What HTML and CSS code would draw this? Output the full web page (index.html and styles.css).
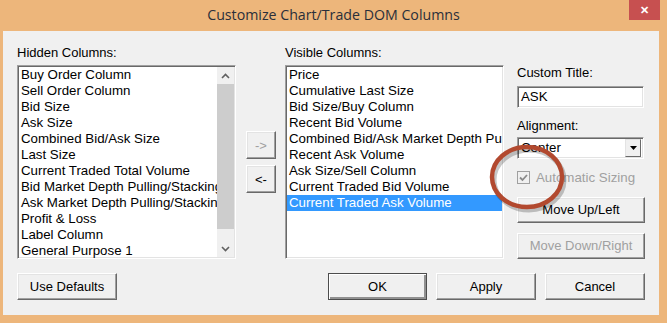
FILE: index.html
```html
<!DOCTYPE html>
<html lang="en">

<head>
    <meta charset="UTF-8">
    <meta name="viewport" content="width=device-width, initial-scale=1.0">
    <link rel="stylesheet" href="styles.css">
</head>

<body>

    <div class="window">
        <div class="titlebar">
            <span></span>
            <span class="title">Customize Chart/Trade DOM Columns</span>
            <span class="close">&#x2715;</span>
        </div>

        <div class="client">
            <div class="main">
                <div class="column">
                    <div class="label">Hidden Columns:</div>
                    <div class="listbox">
                        <ul class="items">
                            <li>Buy Order Column</li>
                            <li>Sell Order Column</li>
                            <li>Bid Size</li>
                            <li>Ask Size</li>
                            <li>Combined Bid/Ask Size</li>
                            <li>Last Size</li>
                            <li>Current Traded Total Volume</li>
                            <li>Bid Market Depth Pulling/Stacking</li>
                            <li>Ask Market Depth Pulling/Stacking</li>
                            <li>Profit &amp; Loss</li>
                            <li>Label Column</li>
                            <li>General Purpose 1</li>
                        </ul>
                        <div class="scrollbar">
                            <div class="arrow">
                                <svg width="9" height="6" viewBox="0 0 9 6"><path d="M1 5 L4.5 1.5 L8 5" fill="none" stroke="#606060" stroke-width="1.6"/></svg>
                            </div>
                            <div class="track">
                                <div class="thumb"></div>
                            </div>
                            <div class="arrow">
                                <svg width="9" height="6" viewBox="0 0 9 6"><path d="M1 1 L4.5 4.5 L8 1" fill="none" stroke="#606060" stroke-width="1.6"/></svg>
                            </div>
                        </div>
                    </div>
                </div>

                <div class="movers">
                    <button class="btn small disabled">-&gt;</button>
                    <button class="btn small">&lt;-</button>
                </div>

                <div class="column">
                    <div class="label">Visible Columns:</div>
                    <div class="listbox">
                        <ul class="items">
                            <li>Price</li>
                            <li>Cumulative Last Size</li>
                            <li>Bid Size/Buy Column</li>
                            <li>Recent Bid Volume</li>
                            <li>Combined Bid/Ask Market Depth Pulling/Stacking</li>
                            <li>Recent Ask Volume</li>
                            <li>Ask Size/Sell Column</li>
                            <li>Current Traded Bid Volume</li>
                            <li class="selected">Current Traded Ask Volume</li>
                        </ul>
                    </div>
                </div>

                <div class="options">
                    <div class="label">Custom Title:</div>
                    <div class="textbox">ASK</div>
                    <div class="label spaced">Alignment:</div>
                    <div class="combo">
                        <span class="combo-text">Center</span>
                        <span class="drop">
                            <svg width="7" height="4" viewBox="0 0 7 4"><path d="M0 0 H7 L3.5 4 Z" fill="#000"/></svg>
                        </span>
                    </div>
                    <div class="check-row">
                        <span class="checkbox">
                            <svg width="9" height="9" viewBox="0 0 9 9"><path d="M1 4.5 L3.5 7 L8 2" fill="none" stroke="#8a8a8a" stroke-width="1.8"/></svg>
                        </span>
                        <span class="check-label">Automatic Sizing</span>
                    </div>
                    <button class="btn wide">Move Up/Left</button>
                    <button class="btn wide disabled">Move Down/Right</button>
                </div>
            </div>

            <div class="footer">
                <button class="btn">Use Defaults</button>
                <div class="actions">
                    <button class="btn default">OK</button>
                    <button class="btn">Apply</button>
                    <button class="btn">Cancel</button>
                </div>
            </div>

            <!-- annotation circle drawn over the dialog -->
            <svg class="marker" width="90" height="80" viewBox="0 0 90 80">
                <ellipse cx="43" cy="38" rx="35" ry="30" fill="none" stroke="rgba(0,0,0,0.22)" stroke-width="5" transform="translate(2 3)"/>
                <ellipse cx="43" cy="38" rx="35" ry="30" fill="none" stroke="#b2492f" stroke-width="4.5"/>
            </svg>
        </div>
    </div>

</body>

</html>
```

FILE: styles.css
```css
body {
    margin: 0;
    font-family: 'Liberation Sans', Arial, sans-serif;
}

.window {
    width: 667px;
    height: 323px;
    background: #edb67b;
    display: flex;
    flex-direction: column;
}

.titlebar {
    height: 31px;
    display: grid;
    grid-template-columns: 1fr auto 1fr;
    align-items: start;
}

.title {
    font-family: 'Open Sans', sans-serif;
    font-size: 14.2px;
    color: #2a2f3a;
    line-height: 30px;
}

.close {
    justify-self: end;
    margin-right: 7px;
    width: 31px;
    height: 20px;
    background: #c75050;
    color: #fff;
    font-size: 11px;
    font-weight: bold;
    text-align: center;
    line-height: 20px;
}

.client {
    position: relative;
    flex: 1;
    margin: 0 8px 8px 3px;
    background: #f0f0f0;
    padding: 14px 14px 0 14px;
    box-sizing: border-box;
}

.main {
    display: flex;
    height: 214px;
}

.label {
    font-size: 13px;
    line-height: 16px;
    height: 16px;
    color: #000;
}

.column {
    width: 219px;
    display: flex;
    flex-direction: column;
}

.listbox {
    margin-top: 4px;
    height: 194px;
    box-sizing: border-box;
    border: 1px solid;
    border-color: #a0a0a0 #ffffff #ffffff #a0a0a0;
    box-shadow: inset 1px 1px #696969, inset -1px -1px #e3e3e3;
    background: #fff;
    display: flex;
    padding: 1px;
    overflow: hidden;
}

.items {
    list-style: none;
    margin: 0;
    padding: 0;
    flex: 1;
    min-width: 0;
}

.items li {
    height: 16px;
    line-height: 16px;
    font-size: 13.3px;
    padding-left: 2px;
    white-space: nowrap;
    overflow: hidden;
    color: #000;
}

.items li.selected {
    background: #3399ff;
    color: #fff;
}

.scrollbar {
    width: 17px;
    display: flex;
    flex-direction: column;
    background: #f0f0f0;
}

.arrow {
    height: 17px;
    display: flex;
    align-items: center;
    justify-content: center;
}

.track {
    flex: 1;
    padding-bottom: 11px;
    display: flex;
}

.thumb {
    flex: 1;
    background: #cdcdcd;
}

.movers {
    width: 30px;
    margin: 0 9px 0 10px;
    padding-top: 86px;
    display: flex;
    flex-direction: column;
    gap: 6px;
}

.btn {
    font-family: 'Liberation Sans', Arial, sans-serif;
    font-size: 13px;
    color: #000;
    background: #f0f0f0;
    border: 1px solid;
    border-color: #ffffff #696969 #696969 #ffffff;
    box-shadow: inset -1px -1px #a0a0a0, inset 1px 1px #e3e3e3;
    height: 27px;
    width: 100px;
    padding: 0;
    margin: 0;
}

.btn.small {
    width: 30px;
    height: 28px;
}

.btn.disabled {
    color: #a0a0a0;
}

.btn.default {
    border: 1px solid #4d4d4d;
    box-shadow: inset 1px 1px #ffffff, inset -2px -2px #909090;
    width: 99px;
}

.options {
    width: 128px;
    margin-left: 13px;
    padding-top: 20px;
    display: flex;
    flex-direction: column;
}

.textbox,
.combo {
    margin-top: 5px;
    width: 127px;
    height: 22px;
    box-sizing: border-box;
    border: 1px solid;
    border-color: #a0a0a0 #ffffff #ffffff #a0a0a0;
    box-shadow: inset 1px 1px #696969, inset -1px -1px #e3e3e3;
    background: #fff;
    font-size: 13.3px;
    line-height: 20px;
    padding-left: 3px;
}

.label.spaced {
    margin-top: 10px;
}

.combo {
    margin-top: 3px;
    display: flex;
    justify-content: space-between;
    padding-right: 2px;
}

.drop {
    width: 16px;
    height: 18px;
    margin-top: 1px;
    box-sizing: border-box;
    background: #f0f0f0;
    border: 1px solid;
    border-color: #e3e3e3 #696969 #696969 #e3e3e3;
    display: flex;
    align-items: center;
    justify-content: center;
}

.check-row {
    margin-top: 11px;
    height: 16px;
    display: flex;
    align-items: center;
    gap: 6px;
}

.checkbox {
    width: 11px;
    height: 11px;
    border: 1px solid #a0a0a0;
    background: #f0f0f0;
    display: flex;
    align-items: center;
    justify-content: center;
}

.check-label {
    font-size: 13.3px;
    color: #a0a0a0;
}

.btn.wide {
    width: 128px;
    margin-top: 11px;
}

.btn.wide.disabled {
    margin-top: 10px;
}

.footer {
    margin-top: 14px;
    display: flex;
    justify-content: space-between;
}

.actions {
    display: flex;
    gap: 9px;
}

.marker {
    position: absolute;
    left: 481px;
    top: 108px;
    width: 90px;
    height: 80px;
    pointer-events: none;
}
```
